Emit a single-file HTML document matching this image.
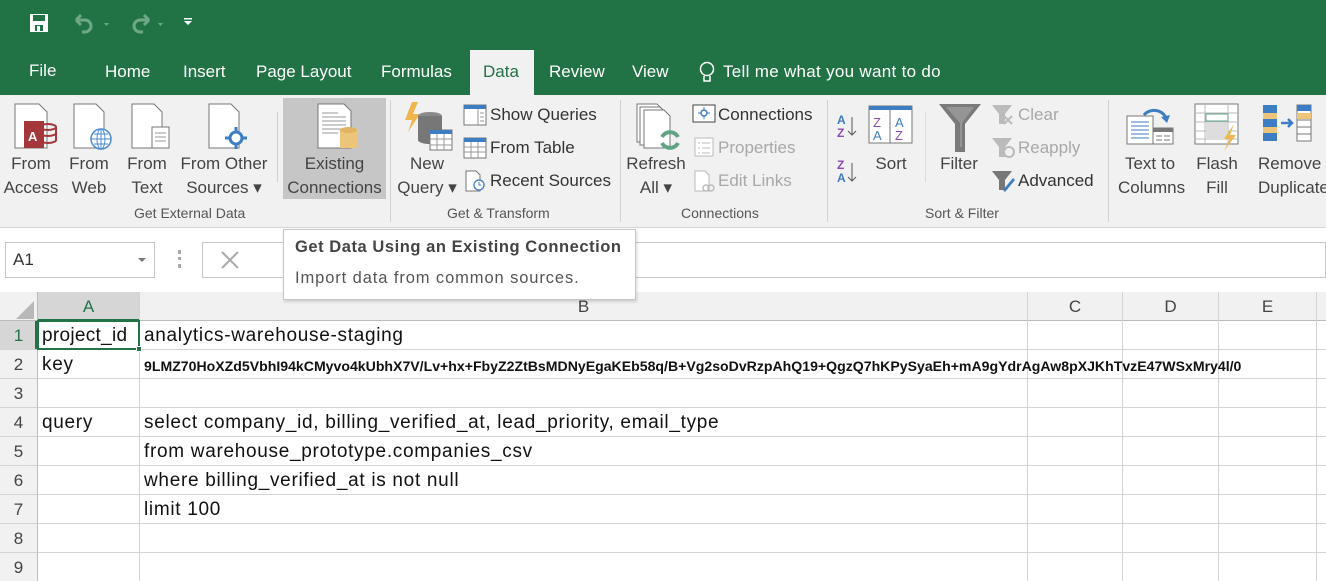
<!DOCTYPE html>
<html><head><meta charset="utf-8"><style>
*{margin:0;padding:0;box-sizing:border-box}
body{width:1326px;height:581px;overflow:hidden;background:#fff;font-family:"Liberation Sans",sans-serif;position:relative;color:#222}
.a{position:absolute;white-space:nowrap}
.tab{position:absolute;top:62px;color:#fff;font-size:17px}
.rb{position:absolute;top:95px;left:0;width:1326px;height:133px;background:#f1f1f1;border-bottom:1px solid #d4d4d4}
.lbl{position:absolute;font-size:17px;color:#444;text-align:center;line-height:24px}
.grp{position:absolute;top:205px;font-size:14px;color:#555}
.sm{position:absolute;font-size:17px;color:#333}
.dis{color:#a8a8a8}
.sep{position:absolute;top:100px;width:1px;height:122px;background:#d0d0d0}
.hl{position:absolute;height:1px;background:#d4d4d4;left:0;width:1326px}
.vl{position:absolute;width:1px;background:#d4d4d4;top:292px;height:289px}
.cell{position:absolute;font-size:19px;letter-spacing:0.7px;color:#111}
.rn{position:absolute;left:0;width:37px;text-align:center;font-size:17px;color:#444}
.ch{position:absolute;top:297px;font-size:17px;color:#444;text-align:center}
</style></head><body>
<div class="a" style="left:0;top:0;width:1326px;height:95px;background:#217346"></div>
<!-- QAT -->
<svg class="a" style="left:29px;top:13px" width="22" height="20"><rect x="1" y="1" width="18" height="18" fill="#fff"/><rect x="4" y="2" width="12" height="6" fill="#217346"/><rect x="6" y="12" width="8" height="6" fill="#217346"/><rect x="8" y="13" width="3" height="5" fill="#fff"/></svg>
<svg class="a" style="left:70px;top:12px" width="100" height="24"><path d="M6 8 h9 a6 6 0 0 1 0 12 h-3 M6 8 l5 -5 M6 8 l5 5" stroke="#6fa886" stroke-width="3" fill="none"/><path d="M34 11 h5 l-2.5 3z" fill="#6fa886"/><path d="M79 8 h-9 a6 6 0 0 0 0 12 h3 M79 8 l-5 -5 M79 8 l-5 5" stroke="#6fa886" stroke-width="3" fill="none"/><path d="M88 11 h5 l-2.5 3z" fill="#6fa886"/></svg>
<svg class="a" style="left:183px;top:17px" width="10" height="10"><rect x="1" y="1" width="8" height="1.5" fill="#fff"/><path d="M1 4 h8 l-4 4z" fill="#fff"/></svg>
<div class="tab" style="left:29px;top:61px">File</div>
<div class="tab" style="left:105px">Home</div>
<div class="tab" style="left:183px">Insert</div>
<div class="tab" style="left:256px">Page Layout</div>
<div class="tab" style="left:381px">Formulas</div>
<div class="a" style="left:470px;top:50px;width:64px;height:46px;background:#f1f1f1"></div>
<div class="tab" style="left:483px;color:#217346">Data</div>
<div class="tab" style="left:549px">Review</div>
<div class="tab" style="left:632px">View</div>
<svg class="a" style="left:698px;top:61px" width="18" height="24"><circle cx="9" cy="8" r="6.5" stroke="#fff" stroke-width="1.5" fill="none"/><path d="M6 15 v5 h6 v-5" stroke="#fff" stroke-width="1.5" fill="none"/></svg>
<div class="tab" style="left:723px;letter-spacing:0.3px">Tell me what you want to do</div>
<div class="rb"></div>
<!-- Get external data -->
<svg class="a" style="left:12px;top:103px" width="46" height="48"><path d="M3 1h24l8 8v36H3z" fill="#fff" stroke="#777"/><rect x="12" y="18" width="20" height="27" fill="#a4373a"/><text x="16" y="38" font-size="13" fill="#fff" font-family="Liberation Sans" font-weight="bold">A</text><ellipse cx="36" cy="24" rx="8" ry="3" fill="none" stroke="#a4373a" stroke-width="2"/><path d="M28 24v14 M44 24v14" stroke="#a4373a" stroke-width="2"/><path d="M28 30a8 3 0 0 0 16 0M28 37a8 3 0 0 0 16 0" stroke="#a4373a" stroke-width="2" fill="none"/></svg>
<svg class="a" style="left:72px;top:103px" width="42" height="48"><path d="M2 1h22l8 8v36H2z" fill="#fff" stroke="#777"/><circle cx="29" cy="36" r="10" fill="#fff" stroke="#4a8bd0" stroke-width="1.5"/><path d="M19 36h20M29 26v20M22 31h14M22 41h14" stroke="#4a8bd0"/><ellipse cx="29" cy="36" rx="4" ry="10" fill="none" stroke="#4a8bd0"/></svg>
<svg class="a" style="left:130px;top:103px" width="42" height="48"><path d="M2 1h22l8 8v36H2z" fill="#fff" stroke="#777"/><rect x="22" y="24" width="17" height="21" fill="#fff" stroke="#777"/><path d="M25 30h11M25 34h11M25 38h11" stroke="#999"/></svg>
<svg class="a" style="left:207px;top:103px" width="44" height="48"><path d="M2 1h22l8 8v36H2z" fill="#fff" stroke="#777"/><circle cx="29" cy="35" r="6" fill="#fff" stroke="#3d7dc4" stroke-width="3"/><path d="M29 24v5M29 41v5M18 35h5M35 35h5" stroke="#3d7dc4" stroke-width="3"/></svg>
<div class="lbl" style="left:0;top:152px;width:62px">From<br>Access</div>
<div class="lbl" style="left:64px;top:152px;width:50px">From<br>Web</div>
<div class="lbl" style="left:122px;top:152px;width:50px">From<br>Text</div>
<div class="lbl" style="left:176px;top:152px;width:96px">From Other<br>Sources ▾</div>
<div class="sep" style="left:277px;top:112px;height:70px"></div>
<div class="a" style="left:283px;top:98px;width:103px;height:101px;background:#c6c6c6"></div>
<svg class="a" style="left:316px;top:103px" width="44" height="48"><path d="M2 1h26l7 7v37H2z" fill="#fff" stroke="#777"/><path d="M6 10h16M6 14h24M6 18h24M6 22h24M6 26h20M6 30h16" stroke="#999"/><rect x="24" y="27" width="17" height="18" fill="#ecc57a"/><ellipse cx="32.5" cy="27" rx="8.5" ry="3" fill="#e2b360"/></svg>
<div class="lbl" style="left:283px;top:152px;width:103px">Existing<br>Connections</div>
<div class="grp" style="left:134px">Get External Data</div>
<div class="sep" style="left:390px"></div>
<!-- Get & Transform -->
<svg class="a" style="left:402px;top:100px" width="54" height="56"><path d="M10 2 L3 20 h7 l-4 12 l12 -18 h-7 l5 -12z" fill="#f0b64e"/><ellipse cx="28" cy="16" rx="12" ry="4" fill="#8a8a8a"/><rect x="16" y="16" width="24" height="24" fill="#777"/><ellipse cx="28" cy="40" rx="12" ry="4" fill="#777"/><rect x="28" y="30" width="22" height="20" fill="#fff" stroke="#777"/><rect x="28" y="30" width="22" height="4" fill="#3d7dc4"/><path d="M28 39h22M28 45h22M35 34v16M42 34v16" stroke="#999"/></svg>
<div class="lbl" style="left:394px;top:152px;width:66px">New<br>Query ▾</div>
<svg class="a" style="left:463px;top:104px" width="24" height="88"><rect x="1" y="1" width="22" height="20" fill="#fff" stroke="#777"/><rect x="1" y="1" width="22" height="4" fill="#3d7dc4"/><path d="M15 5v16M17 9h4M17 13h4M17 17h4" stroke="#999"/><rect x="1" y="34" width="22" height="20" fill="#fff" stroke="#777"/><rect x="1" y="34" width="22" height="4" fill="#3d7dc4"/><path d="M1 43h22M1 48h22M8 38v16M15 38v16" stroke="#999"/><path d="M3 67h10l4 4v16H3z" fill="#fff" stroke="#777"/><circle cx="16" cy="81" r="5" fill="#fff" stroke="#3d7dc4" stroke-width="1.3"/><path d="M16 78v3h2" stroke="#3d7dc4" fill="none"/></svg>
<div class="sm" style="left:490px;top:105px">Show Queries</div>
<div class="sm" style="left:490px;top:138px">From Table</div>
<div class="sm" style="left:490px;top:171px">Recent Sources</div>
<div class="grp" style="left:447px">Get &amp; Transform</div>
<div class="sep" style="left:620px"></div>
<!-- Connections -->
<svg class="a" style="left:636px;top:103px" width="48" height="58"><path d="M1 1h20l6 6v32H1z" fill="#fff" stroke="#777"/><path d="M4 4h20l6 6v32H4z" fill="#fff" stroke="#777"/><path d="M8 7h20l6 6v32H8z" fill="#fff" stroke="#777"/><path d="M26 34a9 9 0 0 1 16 0M42 40a9 9 0 0 1 -16 0" stroke="#5fa383" stroke-width="4" fill="none"/></svg>
<div class="lbl" style="left:624px;top:152px;width:64px">Refresh<br>All ▾</div>
<svg class="a" style="left:692px;top:104px" width="24" height="88"><rect x="1" y="1" width="22" height="17" fill="#fff" stroke="#444"/><circle cx="12" cy="9" r="3" fill="none" stroke="#3d7dc4" stroke-width="1.5"/><path d="M12 3v3M12 12v3M6 9h3M15 9h3" stroke="#3d7dc4"/><rect x="3" y="34" width="18" height="18" fill="#fff" stroke="#bbb"/><path d="M6 39h2M10 39h8M6 44h2M10 44h8M6 49h2M10 49h8" stroke="#bbb"/><path d="M3 67h10l4 4v16H3z" fill="#fff" stroke="#bbb"/><circle cx="14" cy="84" r="3" fill="none" stroke="#bbb" stroke-width="1.5"/><circle cx="19" cy="84" r="3" fill="none" stroke="#bbb" stroke-width="1.5"/></svg>
<div class="sm" style="left:718px;top:105px">Connections</div>
<div class="sm dis" style="left:718px;top:138px">Properties</div>
<div class="sm dis" style="left:718px;top:171px">Edit Links</div>
<div class="grp" style="left:681px">Connections</div>
<div class="sep" style="left:827px"></div>
<!-- Sort & Filter -->
<svg class="a" style="left:836px;top:113px" width="26" height="72"><text x="1" y="11" font-size="12" font-weight="bold" fill="#3d7dc4" font-family="Liberation Sans">A</text><text x="1" y="24" font-size="12" font-weight="bold" fill="#8b4bb8" font-family="Liberation Sans">Z</text><path d="M16 4v18M12 18l4 4l4-4" stroke="#555" fill="none"/><text x="1" y="56" font-size="12" font-weight="bold" fill="#8b4bb8" font-family="Liberation Sans">Z</text><text x="1" y="69" font-size="12" font-weight="bold" fill="#3d7dc4" font-family="Liberation Sans">A</text><path d="M16 50v18M12 64l4 4l4-4" stroke="#555" fill="none"/></svg>
<svg class="a" style="left:868px;top:105px" width="46" height="40"><rect x="1" y="1" width="43" height="37" fill="#fff" stroke="#777"/><rect x="1" y="1" width="43" height="4" fill="#3d7dc4"/><path d="M22 5v33" stroke="#777"/><text x="5" y="22" font-size="13" fill="#8b4bb8" font-family="Liberation Sans">Z</text><text x="5" y="35" font-size="13" fill="#3d7dc4" font-family="Liberation Sans">A</text><text x="27" y="22" font-size="13" fill="#3d7dc4" font-family="Liberation Sans">A</text><text x="27" y="35" font-size="13" fill="#8b4bb8" font-family="Liberation Sans">Z</text></svg>
<div class="lbl" style="left:866px;top:152px;width:50px">Sort</div>
<div class="sep" style="left:925px;top:112px;height:70px;background:#ddd"></div>
<svg class="a" style="left:938px;top:103px" width="44" height="50"><path d="M1 1h42l-16 20v28h-10v-28z" fill="#7a7a7a"/><path d="M8 4h28l-12 16v24h-2v-24z" fill="#959595"/></svg>
<div class="lbl" style="left:934px;top:152px;width:50px">Filter</div>
<svg class="a" style="left:991px;top:104px" width="26" height="88"><path d="M1 1h20l-7 9v10h-6v-10z" fill="#bbb"/><path d="M13 12l8 8M21 12l-8 8" stroke="#bbb" stroke-width="2"/><path d="M1 34h20l-7 9v10h-6v-10z" fill="#bbb"/><circle cx="18" cy="48" r="5" fill="none" stroke="#bbb" stroke-width="2"/><path d="M1 67h20l-7 9v10h-6v-10z" fill="#777"/><path d="M12 86l10-12 2 2-10 12z" fill="#3d7dc4"/></svg>
<div class="sm dis" style="left:1018px;top:105px">Clear</div>
<div class="sm dis" style="left:1018px;top:138px">Reapply</div>
<div class="sm" style="left:1018px;top:171px">Advanced</div>
<div class="grp" style="left:925px">Sort &amp; Filter</div>
<div class="sep" style="left:1108px"></div>
<!-- Data tools -->
<svg class="a" style="left:1126px;top:105px" width="50" height="40"><rect x="1" y="11" width="26" height="28" fill="#fff" stroke="#777"/><path d="M5 17h18M5 21h18M5 25h18M5 29h18M5 33h18" stroke="#3d7dc4"/><rect x="27" y="23" width="20" height="16" fill="#fff" stroke="#777"/><rect x="27" y="23" width="20" height="4" fill="#777"/><path d="M30 31h6M38 31h6M30 35h6M38 35h6" stroke="#777"/><path d="M18 10a12 10 0 0 1 22 4" stroke="#3d7dc4" stroke-width="3" fill="none"/><path d="M35 12l6 6l3-8z" fill="#3d7dc4"/></svg>
<div class="lbl" style="left:1118px;top:152px;width:64px">Text to<br>Columns</div>
<svg class="a" style="left:1194px;top:103px" width="46" height="48"><rect x="1" y="1" width="43" height="40" fill="#fff" stroke="#777"/><path d="M1 10h43M1 19h43M1 28h43M1 36h43M11 1v40M34 1v40" stroke="#bbb"/><rect x="12" y="11" width="22" height="7" fill="#fff" stroke="#5fa383"/><rect x="12" y="20" width="22" height="16" fill="#ddd"/><path d="M40 21 L30 36 h6 l-6 12 l12-16 h-6 l4-11z" fill="#f0b64e"/></svg>
<div class="lbl" style="left:1192px;top:152px;width:50px">Flash<br>Fill</div>
<svg class="a" style="left:1262px;top:104px" width="52" height="40"><rect x="1" y="1" width="14" height="36" fill="#3d7dc4"/><rect x="1" y="9" width="14" height="6" fill="#ecc57a"/><rect x="1" y="23" width="14" height="6" fill="#ecc57a"/><path d="M19 19h10M26 15l4 4l-4 4" stroke="#3d7dc4" stroke-width="2.5" fill="none"/><rect x="35" y="1" width="14" height="36" fill="#fff" stroke="#777"/><rect x="35" y="1" width="14" height="6" fill="#3d7dc4"/><rect x="35" y="9" width="14" height="6" fill="#ecc57a"/><path d="M35 16h14M35 23h14M35 30h14" stroke="#777"/></svg>
<div class="lbl" style="left:1254px;top:152px;width:80px;text-align:left;padding-left:4px">Remove<br>Duplicates</div>
<!-- formula bar -->
<div class="a" style="left:0;top:228px;width:1326px;height:64px;background:#fff"></div>
<div class="a" style="left:5px;top:242px;width:150px;height:36px;border:1px solid #c6c6c6;background:#fff"></div>
<div class="a" style="left:13px;top:250px;font-size:17px;color:#333">A1</div>
<svg class="a" style="left:137px;top:257px" width="10" height="6"><path d="M1 1h8l-4 4z" fill="#777"/></svg>
<div class="a" style="left:178px;top:250px;width:3px;height:18px;border-left:3px dotted #aaa"></div>
<div class="a" style="left:202px;top:242px;width:1124px;height:36px;border:1px solid #c6c6c6;background:#fff"></div>
<svg class="a" style="left:220px;top:250px" width="20" height="20"><path d="M2 2l16 16M18 2l-16 16" stroke="#aaa" stroke-width="2"/></svg>
<!-- grid headers -->
<div class="a" style="left:0;top:292px;width:1326px;height:29px;background:#f1f1f1"></div>
<div class="a" style="left:0;top:321px;width:37px;height:260px;background:#f1f1f1"></div>
<div class="a" style="left:38px;top:292px;width:101px;height:29px;background:#d6d6d6;border-bottom:2px solid #217346"></div>
<div class="a" style="left:0;top:321px;width:37px;height:28px;background:#d6d6d6;border-right:2px solid #217346"></div>
<svg class="a" style="left:14px;top:301px" width="20" height="18"><path d="M20 0v18h-18z" fill="#b8b8b8"/></svg>
<div class="hl" style="top:320px;background:#bbb"></div>
<div class="hl" style="top:349px"></div><div class="hl" style="top:378px"></div><div class="hl" style="top:407px"></div><div class="hl" style="top:436px"></div><div class="hl" style="top:465px"></div><div class="hl" style="top:494px"></div><div class="hl" style="top:523px"></div><div class="hl" style="top:552px"></div>
<div class="vl" style="left:37px;background:#bbb"></div><div class="vl" style="left:139px"></div><div class="vl" style="left:1027px"></div><div class="vl" style="left:1122px"></div><div class="vl" style="left:1218px"></div><div class="vl" style="left:1316px"></div>
<div class="ch" style="left:38px;width:101px;color:#217346">A</div>
<div class="ch" style="left:140px;width:887px">B</div>
<div class="ch" style="left:1028px;width:94px">C</div>
<div class="ch" style="left:1123px;width:95px">D</div>
<div class="ch" style="left:1219px;width:97px">E</div>
<div class="rn" style="top:326px;color:#217346">1</div><div class="rn" style="top:355px">2</div><div class="rn" style="top:384px">3</div><div class="rn" style="top:413px">4</div><div class="rn" style="top:442px">5</div><div class="rn" style="top:471px">6</div><div class="rn" style="top:500px">7</div><div class="rn" style="top:529px">8</div><div class="rn" style="top:558px">9</div>
<div class="a" style="left:37px;top:320px;width:103px;height:30px;border:2px solid #217346"></div>
<div class="a" style="left:136px;top:346px;width:6px;height:6px;background:#217346;border:1px solid #fff"></div>
<div class="cell" style="left:42px;top:325px;letter-spacing:0.3px">project_id</div>
<div class="cell" style="left:144px;top:325px">analytics-warehouse-staging</div>
<div class="cell" style="left:42px;top:354px">key</div>
<div class="cell" style="left:144px;top:358px;font-size:14.1px;letter-spacing:0;font-weight:bold">9LMZ70HoXZd5VbhI94kCMyvo4kUbhX7V/Lv+hx+FbyZ2ZtBsMDNyEgaKEb58q/B+Vg2soDvRzpAhQ19+QgzQ7hKPySyaEh+mA9gYdrAgAw8pXJKhTvzE47WSxMry4l/0</div>
<div class="cell" style="left:42px;top:412px">query</div>
<div class="cell" style="left:144px;top:412px">select company_id, billing_verified_at, lead_priority, email_type</div>
<div class="cell" style="left:144px;top:441px">from warehouse_prototype.companies_csv</div>
<div class="cell" style="left:144px;top:470px">where billing_verified_at is not null</div>
<div class="cell" style="left:144px;top:499px">limit 100</div>
<!-- tooltip -->
<div class="a" style="left:283px;top:229px;width:353px;height:71px;background:#fff;border:1px solid #c6c6c6;box-shadow:1px 2px 3px rgba(0,0,0,.15)"></div>
<div class="a" style="left:295px;top:238px;font-size:16.5px;letter-spacing:0.55px;font-weight:bold;color:#444">Get Data Using an Existing Connection</div>
<div class="a" style="left:295px;top:269px;font-size:16.5px;letter-spacing:0.9px;color:#555">Import data from common sources.</div>
</body></html>
